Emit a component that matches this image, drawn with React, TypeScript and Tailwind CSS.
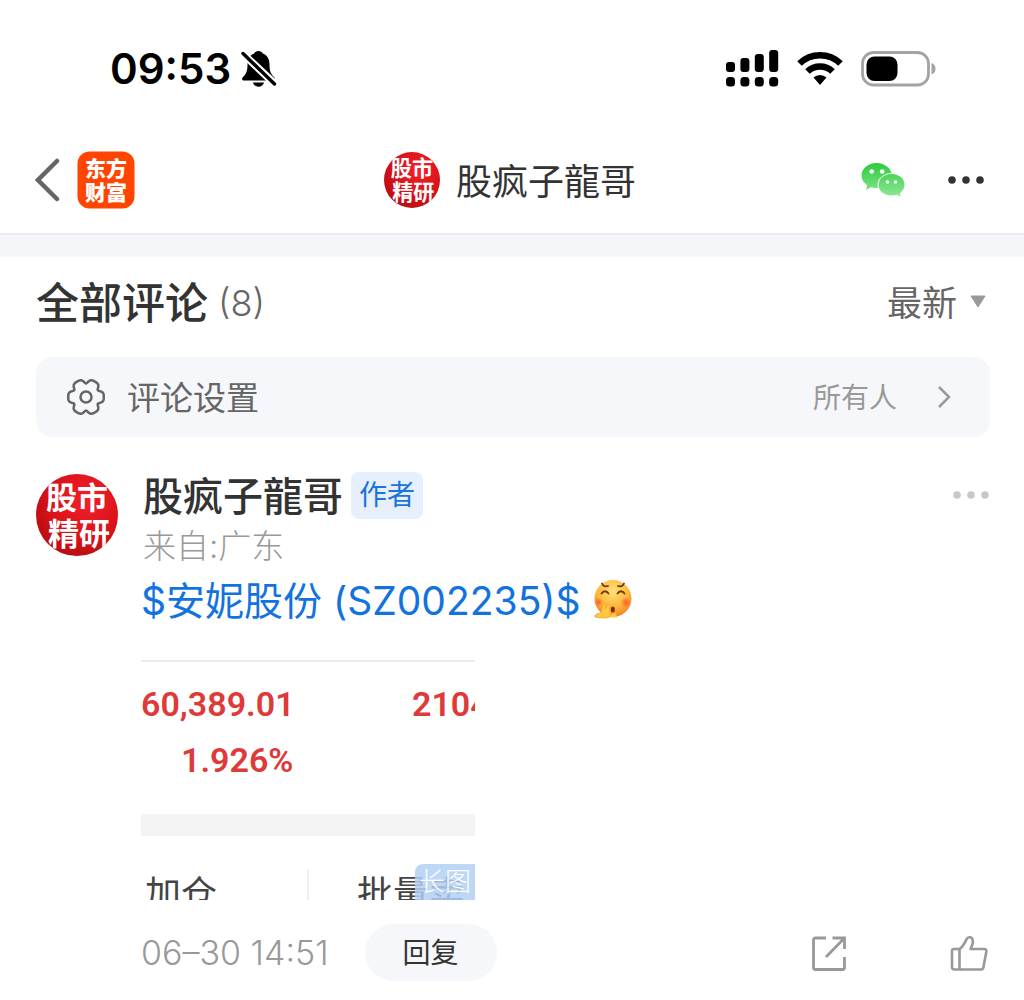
import React, { useState } from 'react';

const FONT = "font-['Inter','Noto_Sans_CJK_SC',sans-serif]";

const gearPath = (() => {
  const pts: string[] = [];
  for (let d = 0; d < 360; d += 3) {
    const a = (d * Math.PI) / 180;
    const r = 17.8 - 4.2 * Math.pow((1 - Math.cos(6 * a)) / 2, 3);
    pts.push(`${(19 + r * Math.cos(a)).toFixed(2)} ${(19 + r * Math.sin(a)).toFixed(2)}`);
  }
  return `M${pts.join('L')}Z`;
})();

const BellOff: React.FC = () => (
  <svg width="36" height="38" viewBox="0 0 36 38" aria-label="静音">
    <path d="M17.500 1c-2 0-3.700 1-4.300 2.500C8.300 5.300 6.500 9.500 6.500 14.500c0 7-1.500 9.500-4.500 12.500C.5 28.500.8 30.500 3 30.500h29c2.200 0 2.500-2 1-3.500-3-3-4.500-5.500-4.500-12.500 0-5-1.800-9.200-6.700-11C21.200 2 19.500 1 17.500 1z" />
    <path d="M12 32.500h11c-.6 2.500-2.800 4.300-5.500 4.300s-4.900-1.800-5.500-4.300z" />
    <path d="M0 2l35 33" stroke="#fff" strokeWidth="7.500" />
    <path d="M2 3.500l31.500 30.500" stroke="#000" strokeWidth="3.400" strokeLinecap="round" />
  </svg>
);

const Signal: React.FC = () => (
  <svg width="53" height="37" viewBox="0 0 53 37" aria-label="信号">
    {[12, 8, 4, 0].map((top, i) => (
      <g key={top}>
        <rect x={i * 14.400} y={top} width="9" height={22 - top} rx="3" />
        <rect x={i * 14.400} y="27" width="9" height="9.500" rx="3.500" />
      </g>
    ))}
  </svg>
);

const Wifi: React.FC = () => (
  <svg width="46" height="36" viewBox="0 0 46 36" fill="none" stroke="#000" strokeWidth="6.500" aria-label="Wi-Fi">
    <path d="M2.500 12.500a29.500 29.500 0 0 1 41 0" />
    <path d="M10.500 20.500a18 18 0 0 1 25 0" />
    <path d="M16.500 26.500a9.500 9.500 0 0 1 13 0L23 34z" fill="#000" stroke="none" />
  </svg>
);

const Battery: React.FC = () => (
  <svg width="75" height="36" viewBox="0 0 75 36" aria-label="电量">
    <rect x="1.500" y="1.500" width="66" height="32.500" rx="11" fill="none" stroke="#a3a3a3" strokeWidth="2.800" />
    <rect x="5.500" y="5.500" width="31" height="24.500" rx="8" />
    <path d="M70.500 12c3 1 4 3.500 4 5.800s-1 4.800-4 5.800z" fill="#a3a3a3" />
  </svg>
);

const AppLogo: React.FC = () => (
  <svg width="58" height="58" viewBox="0 0 58 58" aria-label="东方财富">
    <rect x="0.500" y="0.500" width="57" height="57" rx="12" fill="#ff4500" />
    <g fill="#fff" fontSize="21" fontWeight="900" className="font-['Noto_Sans_CJK_SC',sans-serif]">
      <text x="8" y="25">东方</text>
      <text x="8" y="49">财富</text>
    </g>
  </svg>
);

const Avatar: React.FC<{ className: string }> = ({ className }) => (
  <svg viewBox="0 0 82 82" className={className} aria-label="头像">
    <defs>
      <radialGradient id="seal" cx="0.62" cy="0.32" r="0.75">
        <stop offset="0" stopColor="#f3202a" />
        <stop offset="0.600" stopColor="#d9121a" />
        <stop offset="1" stopColor="#b50d10" />
      </radialGradient>
      <clipPath id="disc">
        <circle cx="41" cy="41" r="41" />
      </clipPath>
    </defs>
    <circle cx="41" cy="41" r="41" fill="url(#seal)" />
    <g clipPath="url(#disc)" fill="#fff" fontSize="31" fontWeight="700" className="font-['Noto_Sans_CJK_SC',sans-serif]">
      <text x="10" y="35">股市</text>
      <text x="12" y="71">精研</text>
    </g>
  </svg>
);

const WeChat: React.FC = () => (
  <svg width="44" height="36" viewBox="0 0 44 36">
    <defs>
      <linearGradient id="wx" x1="0" y1="0" x2="0" y2="36" gradientUnits="userSpaceOnUse">
        <stop offset="0" stopColor="#28cb35" />
        <stop offset="1" stopColor="#93e89b" />
      </linearGradient>
    </defs>
    <path d="M15.500 1C7 1 .5 6.700.5 13.600c0 4 2.200 7.500 5.700 9.800L5 28l5-2.700c1.700.5 3.500.8 5.500.8 8.500 0 15.300-5.600 15.300-12.500S24 1 15.500 1z" fill="url(#wx)" />
    <path d="M30.500 11.500c7.500 0 13.500 5 13.500 11.300 0 3.400-1.800 6.300-4.600 8.400l1 4.300-4.500-2.300c-1.700.5-3.500.8-5.400.8-7.500 0-13.500-5-13.500-11.200S23 11.500 30.500 11.500z" fill="url(#wx)" stroke="#fff" strokeWidth="1" />
    <g fill="#fff">
      <circle cx="10.700" cy="9.500" r="2.300" />
      <circle cx="21.200" cy="9.500" r="2.300" />
      <circle cx="26.500" cy="20" r="1.800" />
      <circle cx="34.500" cy="20" r="1.800" />
    </g>
  </svg>
);

const Dots: React.FC<{ color: string }> = ({ color }) => (
  <svg width="38" height="10" viewBox="0 0 38 10" fill={color}>
    <circle cx="5" cy="5" r="3.800" />
    <circle cx="19" cy="5" r="3.800" />
    <circle cx="33" cy="5" r="3.800" />
  </svg>
);

const GiggleFace: React.FC = () => (
  <svg width="40" height="40" viewBox="0 0 40 40" className="mb-1" aria-label="偷笑">
    <defs>
      <radialGradient id="face" cx="0.500" cy="0.300" r="0.700">
        <stop offset="0" stopColor="#ffe07a" />
        <stop offset="0.600" stopColor="#ffb83a" />
        <stop offset="1" stopColor="#f0802a" />
      </radialGradient>
      <radialGradient id="blush">
        <stop offset="0" stopColor="#ff5a36" />
        <stop offset="1" stopColor="#ff5a36" stopOpacity="0" />
      </radialGradient>
    </defs>
    <circle cx="20" cy="19.500" r="18.500" fill="url(#face)" />
    <circle cx="5.500" cy="23" r="4.500" fill="url(#blush)" />
    <circle cx="33" cy="23.500" r="5.500" fill="url(#blush)" />
    <g fill="none" stroke="#6b3a10" strokeWidth="1.800" strokeLinecap="round">
      <path d="M9 4.500c1 2.500 3.500 3.500 6 2.500" />
      <path d="M25 7c2.500 1 5 0 6-2.500" />
      <path d="M8.500 14.500c2-3 5-3 7 0" />
      <path d="M24.500 14.500c2-3 5-3 7 0" />
    </g>
    <ellipse cx="19.800" cy="30.500" rx="2" ry="3" fill="#7a2d12" />
    <path d="M2 38c-1-2 2-3.500 6-4 0-3 1-7 3-9 1.300-.8 2 .2 1.900 1.500l-.4 3c.8-2.500 2-4.500 3.500-4 1.300.8.700 3 .4 5 1.600 1.500 1.800 5 .6 7.500-4 1.500-10 1-15 0z" fill="#ffc83f" stroke="#f29a2a" strokeWidth="0.800" />
    <path d="M17.500 38.500c-.5-2 .5-3.500 2-4 1.500-1.200 3-1 3.500.5l1.500 3.500z" fill="#ffc83f" />
  </svg>
);

const ShareIcon: React.FC = () => (
  <svg width="36" height="36" viewBox="0 0 36 36" fill="none" stroke="#999" strokeWidth="2.800">
    <path d="M15 3H4.500a2 2 0 0 0-2 2v27.500a2 2 0 0 0 2 2h27a2 2 0 0 0 2-2V22" />
    <path d="M21.500 3h12v11M33.500 3L15 22" />
  </svg>
);

const ThumbIcon: React.FC = () => (
  <svg width="38" height="36" viewBox="0 0 38 36" fill="none" stroke="#999" strokeWidth="2.600" strokeLinejoin="round">
    <path d="M9.500 14H4a2 2 0 0 0-2 2v16a2.500 2.500 0 0 0 2.500 2.500H31a2.500 2.500 0 0 0 2.400-2l3-16.200a2 2 0 0 0-2-2.300H20.500c1.800-3.500 2.800-6.500 2.200-9-.7-3.200-4.700-3.700-6.200-.7-2.200 4.500-4 8.200-7 9.700z" />
    <path d="M9.500 14v20.500" />
  </svg>
);

export default function App() {
  const [sort, setSort] = useState('最新');

  return (
    <div className={`min-h-screen bg-white text-[#333] ${FONT}`}>
      {/* Status bar */}
      <div className="flex h-[127px] items-center justify-between pl-[110px] pr-[88px] pt-[10px] text-black">
        <div className="flex items-center gap-[10px]">
          <span className="text-[42px] font-semibold leading-[48px]">09:53</span>
          <BellOff />
        </div>
        <div className="flex items-center gap-[18px]">
          <Signal />
          <Wifi />
          <Battery />
        </div>
      </div>

      {/* Header */}
      <header className="flex h-[108px] items-center justify-between border-b-2 border-[#ebecee] px-[35px]">
        <div className="flex flex-1 items-center gap-4">
          <button aria-label="返回">
            <svg width="26" height="44" viewBox="0 0 26 44" fill="none" stroke="#666" strokeWidth="4.500" strokeLinecap="round">
              <path d="M22 3L3 22l19 19" />
            </svg>
          </button>
          <AppLogo />
        </div>
        <div className="flex items-center gap-4">
          <Avatar className="size-14" />
          <h1 className="pt-1 text-[36px] leading-[48px]">股疯子龍哥</h1>
        </div>
        <div className="flex flex-1 items-center justify-end gap-[42px] pr-1">
          <button aria-label="微信分享"><WeChat /></button>
          <button aria-label="更多"><Dots color="#333" /></button>
        </div>
      </header>
      <div className="h-[22px] bg-[#f5f6f9]" />

      <main className="pl-9 pr-[34px]">
        <div className="flex h-[100px] items-center justify-between pb-2">
          <h2 className="flex items-center gap-[10px] text-[43px] font-medium leading-[56px]">
            全部评论
            <span className="text-[36px] font-light text-[#666]">(8)</span>
          </h2>
          <div className="relative text-[35px] text-[#666]">
            <select
              value={sort}
              onChange={(e) => setSort(e.target.value)}
              aria-label="评论排序"
              className="appearance-none bg-transparent pr-8 leading-[48px] outline-none"
            >
              <option>最新</option>
              <option>最早</option>
            </select>
            <svg width="16" height="14" viewBox="0 0 16 14" className="pointer-events-none absolute right-1 top-[18px]">
              <path d="M1 1h14L8 12z" fill="#999" stroke="#999" strokeLinejoin="round" />
            </svg>
          </div>
        </div>

        <button className="flex h-20 w-full items-center rounded-2xl bg-[#f6f7fa] pl-[31px] pr-[39px]">
          <svg width="38" height="38" viewBox="0 0 38 38" fill="none" stroke="#666" strokeWidth="2.500">
            <path d={gearPath} />
            <circle cx="19" cy="19" r="5.500" />
          </svg>
          <span className="ml-[22px] pt-0.5 text-[33px] leading-[48px] text-[#666]">评论设置</span>
          <span className="ml-auto pt-0.5 text-[28px] leading-10 text-[#999]">所有人</span>
          <svg width="14" height="22" viewBox="0 0 14 22" fill="none" stroke="#999" strokeWidth="2.500" className="ml-10">
            <path d="M2 1l10 10L2 21" />
          </svg>
        </button>

        <article className="flex gap-[23px] pt-[34px]">
          <Avatar className="mt-[3px] size-[82px] shrink-0" />
          <div className="min-w-0 flex-1">
            <div className="flex h-12 items-center pl-0.5">
              <span className="pt-1 text-[40px] font-medium leading-[48px]">股疯子龍哥</span>
              <span className="ml-2 rounded-lg bg-[#e6effb] px-2 text-[28px] leading-[47px] text-[#1a73de]">作者</span>
              <button className="ml-auto" aria-label="更多操作"><Dots color="#c8c8c8" /></button>
            </div>
            <p className="mt-1 pl-0.5 text-[33px] font-light leading-[46px] text-[#999]">来自:广东</p>
            <div className="mt-1 flex items-center gap-3 leading-[56px]">
              <a href="#" className="text-[39px] text-[#1272de]">$安妮股份 (SZ002235)$</a>
              <GiggleFace />
            </div>

            {/* Attached long picture, cropped to its top */}
            <div className="relative mt-[31px] h-[240px] w-[334px] overflow-hidden border-t-2 border-[#ececec]">
              <div className="whitespace-nowrap pt-[14px] font-['Roboto',sans-serif] text-[34px] font-semibold leading-[56px] text-[#de3a3a]">
                <div className="flex">
                  <span className="w-[271px] shrink-0">60,389.01</span>
                  <span>2104</span>
                </div>
                <div className="pl-10">1.926%</div>
              </div>
              <div className="mt-[26px] h-[22px] bg-[#f4f4f4]" />
              <div className="flex items-start whitespace-nowrap pt-[34px] text-[36px] leading-[48px] text-[#444]">
                <span className="w-[166px] pl-1">加仓</span>
                <span className="h-12 border-l-2 border-[#eee]" />
                <span className="pl-12">批量卖</span>
              </div>
              <span className="absolute bottom-0 right-0 rounded-tl-lg bg-[#b4d0f5]/85 px-1 text-[26px] font-light leading-9 text-white">长图</span>
            </div>

            <div className="flex h-[105px] items-center">
              <time className="text-[34px] font-light leading-[48px] text-[#999]">06–30 14:51</time>
              <button className="ml-9 h-[57px] rounded-full bg-[#f6f7fa] px-[38px] text-[28px]">回复</button>
              <button className="ml-auto" aria-label="分享"><ShareIcon /></button>
              <button className="ml-[103px] pr-0.5" aria-label="点赞"><ThumbIcon /></button>
            </div>
          </div>
        </article>
      </main>
    </div>
  );
}
